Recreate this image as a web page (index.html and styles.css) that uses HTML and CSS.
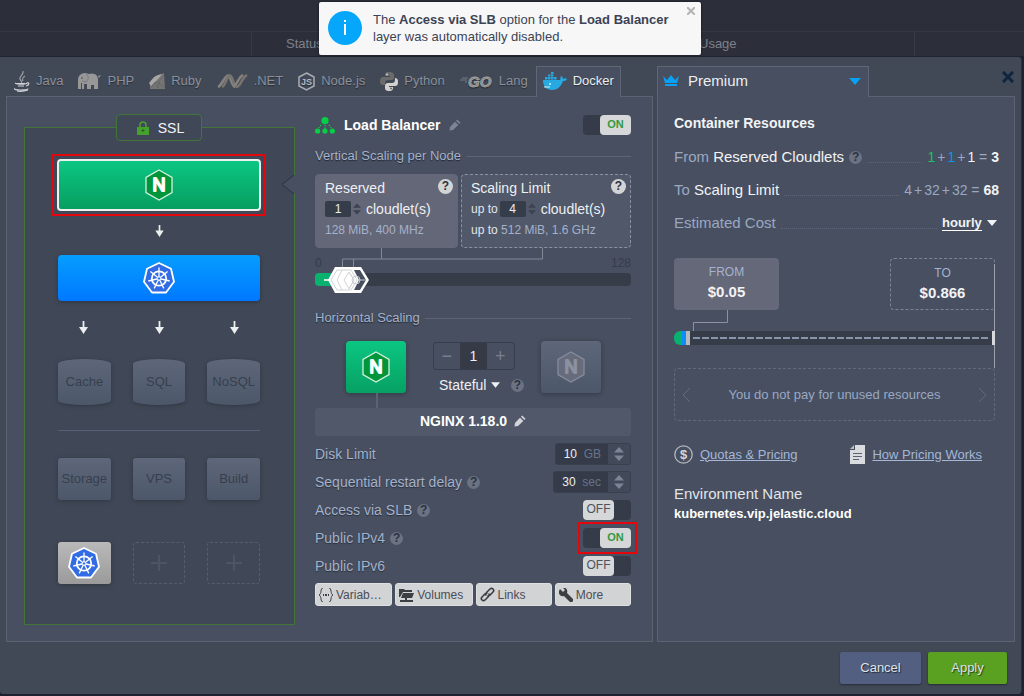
FILE: index.html
```html
<!DOCTYPE html>
<html lang="en">
<head>
<meta charset="utf-8">
<meta name="viewport" content="width=device-width, initial-scale=1">
<title>Environment topology</title>
<link rel="stylesheet" href="styles.css">
</head>
<body>
<svg class="defs" aria-hidden="true">
  <defs>
    <symbol id="nginx" viewBox="0 0 28 32">
      <path d="M14 1 27 8.500V23.500L14 31 1 23.500V8.500z" fill="#019639" stroke="#d5efdf" stroke-width="1.300"/>
      <text x="14" y="22" text-anchor="middle" font-family="Liberation Sans, sans-serif" font-size="18" fill="#fff" stroke="#fff" stroke-width="1.800" stroke-linejoin="round">N</text>
    </symbol>
    <symbol id="nginx-off" viewBox="0 0 28 32">
      <path d="M14 1 27 8.500V23.500L14 31 1 23.500V8.500z" fill="#666c7c" stroke="#868c9b" stroke-width="1.300"/>
      <text x="14" y="22" text-anchor="middle" font-family="Liberation Sans, sans-serif" font-size="18" fill="#8b91a0" stroke="#8b91a0" stroke-width="1.800" stroke-linejoin="round">N</text>
    </symbol>
    <symbol id="k8s" viewBox="0 0 34 34">
      <path d="M17 2 29 7.800 32 20.800 24 31.500H10L2 20.800 5 7.800z" fill="#326ce5" stroke="#fff" stroke-width="1.800" stroke-linejoin="round"/>
      <g stroke="#fff" fill="none">
        <circle cx="17" cy="17.500" r="7.200" stroke-width="1.800"/>
        <path stroke-width="1.300" d="M17 6.500V17.500M25.600 10.600 17 17.500M27.700 20 17 17.500M21.800 27.400 17 17.500M12.200 27.400 17 17.500M6.300 20 17 17.500M8.400 10.600 17 17.500"/>
        <circle cx="17" cy="17.500" r="1.700" fill="#326ce5" stroke-width="1"/>
      </g>
    </symbol>
    <symbol id="arrow" viewBox="0 0 9 13">
      <path d="M3.600 0h1.800v6H9L4.500 13 0 6h3.600z" fill="#eceef0"/>
    </symbol>
    <symbol id="pencil" viewBox="0 0 12 12">
      <path d="M8.200 .500 11.500 3.800 10.300 5 7 1.700zM6 2.700 9.300 6 4 11 .500 11.500 1 8z" fill="currentColor"/>
    </symbol>
    <symbol id="updown" viewBox="0 0 10 14">
      <path d="M5 0 10 5.500H0zM5 14 0 8.500H10z" fill="currentColor"/>
    </symbol>
    <symbol id="caret" viewBox="0 0 10 6"><path d="M0 0h10L5 6z" fill="currentColor"/></symbol>
  </defs>
</svg>

<div class="backdrop" aria-hidden="true">
  <div class="backdrop-bar"></div>
  <div class="backdrop-head"><span></span><span>Status</span><span>Usage</span><span></span></div>
</div>

<aside class="toast" role="status">
  <svg class="toast-icon" width="34" height="34" viewBox="0 0 34 34"><circle cx="17" cy="17" r="17" fill="#06a7fb"/><rect x="16" y="13" width="2" height="11" fill="#fff"/><rect x="16" y="9" width="2" height="2" fill="#fff"/></svg>
  <p>The <b>Access via SLB</b> option for the <b>Load Balancer</b> layer was automatically disabled.</p>
  <button class="toast-close" aria-label="Dismiss"><svg width="8" height="8" viewBox="0 0 8 8"><path d="M0 0 8 8M8 0 0 8" stroke="#b4b4b4" stroke-width="2"/></svg></button>
</aside>

<main class="dialog">
  <div class="columns">
    <section class="column">
      <nav class="tabs">
        <button class="tab"><svg width="17" height="21" viewBox="0 0 17 21" fill="none" stroke="#9da1a8" stroke-width="1.200"><path d="M10 0C11 4 6 5 7 8s3 2 1 5M12 5C9 7 9 8 10 10"/><path stroke="#d0d2d6" d="M4 12.500h8M5 15h6M3 12c-3 1 10 2 11 0 2-1 3 2-1 3M2 17.500c-3 2 13 2 13 0M4 20c4 1 8 0 11-1"/></svg>Java</button>
        <button class="tab"><svg width="23" height="17" viewBox="0 0 23 17" fill="#979798"><path d="M0 16V7C0 3 3 0 7 0c2 0 3 1 4 1C17-1 21 3 20 9v7h-4v-4h-3v4H9v-5H6v5H4v-6H3v6zM20 3l3-1-2 3z"/><path d="M8 1c3 2 3 5 0 8L4 8" fill="none" stroke="#6b7078" stroke-width=".8"/><circle cx="4" cy="5" r=".8" fill="#444"/></svg>PHP</button>
        <button class="tab"><svg width="16" height="16" viewBox="0 0 16 16"><path d="M1 11 7 3 15 0 16 16H1z" fill="#767573"/><path d="M0 10 5 4 9 2 13 1 10 5 7 8 2 13z" fill="#a9a7a4"/><path d="M2 15 6 9 9 15 11 7 15 3M7 8 15 14" stroke="#60646a" fill="none" stroke-width=".8"/></svg>Ruby</button>
        <button class="tab"><svg width="31" height="14" viewBox="0 0 31 14" fill="none" stroke-width="2.600"><path stroke="#85817d" d="M1 13C5 11 7 3 11 1.500c3 0 3 10.500 7 11.500"/><path stroke="#77736f" d="M5 13C9 11 9 3 13 1.500c3 0 3 10.500 7 11.500 4-1 5-10 10-12"/><path stroke="#85817d" d="M17 12C21 10 21 3 26 1"/></svg>.NET</button>
        <button class="tab"><svg width="17" height="19" viewBox="0 0 17 19"><path d="M8.500 1 16 5v9l-7.500 4L1 14V5z" fill="none" stroke="#a9adb4" stroke-width="1.500"/><text x="8.500" y="13" text-anchor="middle" font-family="Liberation Sans, sans-serif" font-size="9" font-weight="700" fill="#b8bbc1">JS</text></svg>Node.js</button>
        <button class="tab"><svg width="18" height="19" viewBox="0 0 18 19"><path d="M9 0C5 0 5 2 5 4h5v1H3C1 5 0 7 0 9.500S1 13 3 13h2v-2c0-2 1-3 3-3h4c1 0 2-1 2-2V3c0-2-2-3-5-3z" fill="#6b6b6b"/><path d="M9 19c4 0 4-2 4-4H9v-1h6c2 0 3-1 3-4s-1-4-3-4v2c0 2-1 3-3 3H8c-2 0-3 1-3 3v2c0 2 1 3 4 3z" fill="#d3d2cf"/><circle cx="7" cy="2.500" r="1" fill="#ccc"/><circle cx="11" cy="16.500" r="1" fill="#666"/></svg>Python</button>
        <button class="tab"><svg class="golang" width="33" height="14" viewBox="0 0 33 14"><path d="M2 4h6M0 6h7M5 8h2" stroke="#77797e" stroke-width="1.200"/><text x="8" y="13" font-family="Liberation Sans, sans-serif" font-size="15" font-weight="700" font-style="italic" fill="#a4a4a4" stroke="#a4a4a4" stroke-width=".8">GO</text></svg>Lang</button>
        <button class="tab tab-active"><svg width="24" height="18" viewBox="0 0 24 18" fill="#27aae1"><path d="M0 8h17c1-2 0-3 1-4 2 1 2 2 2 3 1-1 3-1 4 0-1 2-3 2-4 2-2 6-6 9-11 9C3 18 0 14 0 8z"/><path d="M2 5h2.500v2.500H2zM5 5h2.500v2.500H5zM8 5h2.500v2.500H8zM11 5h2.500v2.500H11zM5 2.500h2.500v2H5zM8 2.500h2.500v2H8zM8 0h2.500v2H8z"/><circle cx="7" cy="12" r="1" fill="#d7eefa"/><path d="M1 15h6" stroke="#d7eefa"/></svg>Docker</button>
      </nav>

      <div class="panel topology-panel">
        <div class="topology">
          <button class="ssl"><svg width="12" height="14" viewBox="0 0 12 14"><path d="M3 6V4a3 3 0 0 1 6 0v2" fill="none" stroke="#4e9f38" stroke-width="1.500"/><path d="M0 6h12v8H0z" fill="#45a02c"/><path d="M6 8v3M4.500 9.500h3" stroke="#2d5b2c"/></svg>SSL</button>
          <svg class="notch" width="14" height="20" viewBox="0 0 14 20"><path d="M14 0 1 9.500 14 19z" fill="#474f60"/><path d="M13 0 1 9.500 13 19" fill="none" stroke="#2b3240"/></svg>
          <div class="highlight"><button class="layer layer-nginx" aria-label="NGINX load balancer"><svg width="28" height="32"><use href="#nginx"/></svg></button></div>
          <div class="arrows arrows-one"><svg width="9" height="12"><use href="#arrow"/></svg></div>
          <button class="layer layer-k8s" aria-label="Kubernetes"><svg width="34" height="34"><use href="#k8s"/></svg></button>
          <div class="arrows arrows-three"><svg width="9" height="13"><use href="#arrow"/></svg><svg width="9" height="13"><use href="#arrow"/></svg><svg width="9" height="13"><use href="#arrow"/></svg></div>
          <div class="nodes"><button class="node node-db">Cache</button><button class="node node-db">SQL</button><button class="node node-db">NoSQL</button></div>
          <hr class="divider">
          <div class="nodes"><button class="node">Storage</button><button class="node">VPS</button><button class="node">Build</button></div>
          <div class="nodes nodes-extra">
            <button class="node node-k8s" aria-label="Kubernetes"><svg width="34" height="34"><use href="#k8s"/></svg></button>
            <button class="node node-add" aria-label="Add layer"><svg width="16" height="16" viewBox="0 0 16 16"><path d="M8 0v16M0 8h16" stroke="#4b5566" stroke-width="2"/></svg></button>
            <button class="node node-add" aria-label="Add layer"><svg width="16" height="16" viewBox="0 0 16 16"><path d="M8 0v16M0 8h16" stroke="#4b5566" stroke-width="2"/></svg></button>
          </div>
        </div>

        <div class="settings">
          <header class="layer-title">
            <svg width="20" height="17" viewBox="0 0 20 17" fill="#07cf45"><circle cx="10" cy="3.700" r="3.600"/><circle cx="2.600" cy="14" r="2.600"/><circle cx="10" cy="14" r="2.600"/><circle cx="17.400" cy="14" r="2.600"/><path d="M10 8v4M6 8 3 12M14 8l3 4" stroke="#07cf45" stroke-width="1.300" stroke-dasharray="1.300 1.300"/></svg>
            <h1>Load Balancer</h1>
            <button class="icon-button dim" aria-label="Rename"><svg width="12" height="12"><use href="#pencil"/></svg></button>
            <label class="toggle"><input type="checkbox" role="switch" checked aria-label="Load Balancer"><span class="knob"></span></label>
          </header>

          <h2 class="section">Vertical Scaling per Node</h2>
          <div class="cards">
            <div class="card card-reserved">
              <div class="card-head"><span>Reserved</span><button class="help help-light" aria-label="Help">?</button></div>
              <label class="card-value"><input type="text" value="1"><svg width="8" height="12"><use href="#updown"/></svg><span>cloudlet(s)</span></label>
              <p>128 MiB, 400 MHz</p>
            </div>
            <div class="card card-limit">
              <div class="card-head"><span>Scaling Limit</span><button class="help help-light" aria-label="Help">?</button></div>
              <label class="card-value"><em>up to</em><input type="text" value="4"><svg width="8" height="12"><use href="#updown"/></svg><span>cloudlet(s)</span></label>
              <p><em>up to</em> 512 MiB, 1.6 GHz</p>
            </div>
          </div>
          <div class="slider">
            <div class="slider-scale"><span>0</span><span>128</span></div>
            <input class="slider-track" type="range" min="0" max="128" value="4" aria-label="Cloudlets">
            <svg class="slider-overlay" width="240" height="48" viewBox="0 0 240 48">
              <path d="M66.500 0v11M27.500 20V11H227.500V0M38.500 11v9" fill="none" stroke="#838995" />
              <path d="M9 32h6" stroke="#d5eadf" stroke-width="2"/>
              <path d="M13 32 20 19H46L54 32 46 45H20z" fill="#fff"/>
              <path d="M39 22h6l6 10-6 10h-6l5-10z" fill="#474f60"/>
              <path d="M22 22 16 32l6 10h14l6-10-6-10zM27 22l-5 10 5 10M29 32l5-8 5 8-5 9zM34 24l5 8-5 9" fill="none" stroke="#d3d4d8"/>
              <circle cx="41" cy="32" r="4" fill="none" stroke="#c9cbd1"/>
              <path d="M44 32h7" stroke="#c9cbd1"/>
            </svg>
          </div>

          <h2 class="section section-horizontal">Horizontal Scaling</h2>
          <div class="scaling">
            <button class="tile tile-on" aria-label="NGINX node"><svg width="28" height="32"><use href="#nginx"/></svg></button>
            <div class="scaling-controls">
              <div class="counter"><button aria-label="Fewer">−</button><input type="text" value="1" aria-label="Nodes"><button aria-label="More">+</button></div>
              <div class="mode"><select aria-label="Scaling mode"><option>Stateful</option></select><svg width="9" height="6"><use href="#caret"/></svg><button class="help" aria-label="Help">?</button></div>
            </div>
            <button class="tile" aria-label="Add node"><svg width="28" height="32"><use href="#nginx-off"/></svg></button>
          </div>
          <button class="version">NGINX 1.18.0 <svg width="12" height="12"><use href="#pencil"/></svg></button>

          <div class="form">
            <div class="row"><label for="disk">Disk Limit</label>
              <div class="field"><input id="disk" type="text" value="10"><span class="unit">GB</span><button aria-label="Step"><svg width="10" height="14"><use href="#updown"/></svg></button></div></div>
            <div class="row"><label for="delay">Sequential restart delay</label><button class="help" aria-label="Help">?</button>
              <div class="field"><input id="delay" type="text" value="30"><span class="unit">sec</span><button aria-label="Step"><svg width="10" height="14"><use href="#updown"/></svg></button></div></div>
            <div class="row"><label for="slb">Access via SLB</label><button class="help" aria-label="Help">?</button>
              <div class="toggle"><input id="slb" type="checkbox" role="switch"><span class="knob"></span></div></div>
            <div class="row"><label for="ipv4">Public IPv4</label><button class="help" aria-label="Help">?</button>
              <div class="toggle toggle-marked"><input id="ipv4" type="checkbox" role="switch" checked><span class="knob"></span></div></div>
            <div class="row"><label for="ipv6">Public IPv6</label>
              <div class="toggle"><input id="ipv6" type="checkbox" role="switch"><span class="knob"></span></div></div>
          </div>

          <div class="tools">
            <button><svg width="14" height="14" viewBox="0 0 14 14" fill="none" stroke="#3c3e42"><path d="M4 0C1 0 3 6 0 7c3 1 1 7 4 7M10 0c3 0 1 6 4 7-3 1-1 7-4 7"/><path d="M4 7h1M6 7h2M9 7h1" stroke-width="2"/></svg>Variab…</button>
            <button><svg width="15" height="14" viewBox="0 0 15 14" fill="#3c3e42"><path d="M0 9V1h5l1 1h7v2H4L1 9zM4 5h11l-2 5H2zM6 10h2v2h6v2H1v-2h5z"/></svg>Volumes</button>
            <button><svg width="15" height="15" viewBox="0 0 15 15" fill="none" stroke="#3c3e42" stroke-width="1.600" stroke-linecap="round"><path d="M6 8C5 7 6 6 7 5l3-3c2-2 5 1 3 3l-3 3-2 1M9 7c1 1 0 2-1 3l-3 3c-2 2-5-1-3-3l3-3 2-1"/></svg>Links</button>
            <button><svg width="14" height="14" viewBox="0 0 14 14" fill="#3c3e42"><path d="M1 1 4 4 6 2 4 0c3-1 5 2 4 5l6 6c1 2-1 4-3 3L5 8C2 9-1 6 0 3z"/></svg>More</button>
          </div>
        </div>
      </div>
    </section>

    <section class="column">
      <div class="tabs">
        <label class="plan">
          <svg width="16" height="12" viewBox="0 0 16 12" fill="#09a1f5"><path d="M0 1 4 5 8 0l4 5 4-4-2 7H2zM2 9h12v2H2z"/></svg>
          <select aria-label="Plan"><option>Premium</option></select>
          <svg class="plan-caret" width="12" height="7"><use href="#caret"/></svg>
        </label>
        <button class="close" aria-label="Close"><svg width="12" height="12" viewBox="0 0 12 12"><path d="M1 1 11 11M11 1 1 11" stroke="#10243d" stroke-width="3"/></svg></button>
      </div>
      <div class="panel pricing">
        <h2 class="pricing-title">Container Resources</h2>
        <div class="line"><span><i>From</i> Reserved Cloudlets</span><button class="help" aria-label="Help">?</button><span class="dots"></span><span class="sum"><span class="green">1</span><i>+</i><span class="blue">1</span><i>+</i><span class="white">1</span> = <b>3</b></span></div>
        <div class="line"><span><i>To</i> Scaling Limit</span><span class="dots"></span><span class="sum">4<i>+</i>32<i>+</i>32 = <b>68</b></span></div>
        <div class="line"><label for="period"><i>Estimated Cost</i></label><span class="dots"></span><select id="period" class="period"><option>hourly</option></select><svg width="10" height="6"><use href="#caret"/></svg></div>

        <div class="costs">
          <div class="cost cost-from"><span>FROM</span><b>$0.05</b></div>
          <div class="cost cost-to"><span>TO</span><b>$0.866</b></div>
          <svg class="from-link" width="60" height="35" viewBox="0 0 60 35"><path d="M53.500 0v12.500H19.500V35" fill="none" stroke="#8d929d"/></svg>
          <div class="to-link"></div>
        </div>
        <div class="meter"><span class="meter-green"></span><span class="meter-blue"></span><span class="meter-grey"></span><span class="meter-rest"></span><span class="meter-end"></span></div>
        <div class="note">
          <button aria-label="Previous"><svg width="8" height="14" viewBox="0 0 8 14"><path d="M8 0 1 7l7 7" fill="none" stroke="#616b7b"/></svg></button>
          <p>You do not pay for unused resources</p>
          <button aria-label="Next"><svg width="8" height="14" viewBox="0 0 8 14"><path d="M0 0 7 7l-7 7" fill="none" stroke="#616b7b"/></svg></button>
        </div>
        <div class="links">
          <a href="#quotas"><svg width="19" height="19" viewBox="0 0 19 19"><circle cx="9.500" cy="9.500" r="8.700" fill="none" stroke="#b4b8bf" stroke-width="1.300"/><text x="9.500" y="14" text-anchor="middle" font-family="Liberation Sans, sans-serif" font-size="13" font-weight="700" fill="#d4d6da">$</text></svg><span>Quotas &amp; Pricing</span></a>
          <a href="#pricing"><svg width="15" height="19" viewBox="0 0 15 19"><path d="M5 0h10v19H0V5h5z" fill="#dadbde"/><path d="M0 4 4 0v4z" fill="#b9bcc2"/><path d="M3 8.500h9M3 11.500h9M3 14.500h6" stroke="#5b6271"/></svg><span>How Pricing Works</span></a>
        </div>
        <dl class="env"><dt>Environment Name</dt><dd>kubernetes.vip.jelastic.cloud</dd></dl>
      </div>
    </section>
  </div>
  <footer class="actions"><button class="cancel">Cancel</button><button class="apply">Apply</button></footer>
</main>
</body>
</html>
```
FILE: styles.css
```css
* { box-sizing: border-box; }

body {
  margin: 0;
  min-height: 100vh;
  background: #1d222e;
  color: #f2f3f5;
  font: 13px/16px "Liberation Sans", Arial, sans-serif;
}

h1, h2, p, dl, dd { margin: 0; font-weight: 400; }
i, em { font-style: normal; }
svg { flex: none; display: block; }
button, input, select { font: inherit; color: inherit; border: 0; padding: 0; margin: 0; background: none; }
select { appearance: none; outline: none; }
button { cursor: pointer; }
.defs { position: absolute; width: 0; height: 0; }

b, h1, .pricing-title, dd, .version { font-weight: 700; }

/* backdrop */
.backdrop { background: #2c2f3a; color: #7e818a; }
.backdrop-bar { height: 32px; border-bottom: 1px solid #343844; }
.backdrop-head { display: grid; grid-template-columns: 252fr 409fr 254fr 109fr; height: 25px; line-height: 24px; border-bottom: 1px solid #20242e; }
.backdrop-head span { padding-left: 34px; }
.backdrop-head span:first-child, .backdrop-head span:nth-child(3) { border-right: 1px solid #363a45; }
.backdrop-head span:nth-child(3) { padding-left: 38px; }

.toast {
  position: absolute;
  z-index: 5;
  top: 2px;
  left: 50%;
  width: 382px;
  margin-left: -193px;
  padding: 9px 24px 10px 9px;
  display: flex;
  gap: 11px;
  background: #f7f7f7;
  color: #3c4354;
  border-radius: 2px;
  box-shadow: 0 0 3px rgba(0, 0, 0, .6);
}
.toast p { line-height: 17px; }
.toast-close { position: absolute; top: 5px; right: 6px; }

/* dialog */
.dialog {
  margin: 0 3px 3px 0;
  background: #414957;
  border-radius: 0 3px 3px 3px;
  box-shadow: 1px 0 0 #2b313d;
}
.columns { display: grid; grid-template-columns: 647fr 358fr; gap: 4px; padding: 9px 6px 0; }
.column { display: flex; flex-direction: column; min-width: 0; }
.tabs { display: flex; gap: 1px; height: 31px; margin-bottom: -1px; }
.tab { display: flex; align-items: center; gap: 6px; padding: 0 6px 2px; color: #8b909b; text-shadow: 0 1px 1px rgba(0, 0, 0, .4); border: 1px solid transparent; border-bottom: 0; white-space: nowrap; }
.tab-active { background: #474f60; border-color: #5f6777; color: #eceef1; z-index: 1; }
.golang { overflow: visible; }
.panel { flex: 1; border: 1px solid #5b6373; background: #474f60; }

/* topology */
.topology-panel { display: grid; grid-template-columns: 271fr 316fr; gap: 20px; padding: 18px 21px 16px 17px; }
.topology { position: relative; margin-top: 12px; padding: 26px 34px 40px 33px; border: 1px solid #417538; background: #404857; }
.ssl { position: absolute; top: -14px; left: 50%; width: 86px; height: 27px; margin-left: -44px; display: flex; align-items: center; justify-content: center; gap: 9px; padding-left: 4px; background: #404857; border: 1px solid #417538; border-radius: 4px; font-size: 14px; }
.notch { position: absolute; top: 47px; right: -1px; }
.highlight { margin: 0 -6px; padding: 3px; border: 2px solid #e3060c; }
.layer { display: flex; align-items: center; justify-content: center; width: 100%; border-radius: 4px; }
.layer-nginx { height: 52px; border: 2px solid #eef1ef; background: linear-gradient(#0cc682, #069e60); }
.layer-k8s { height: 46px; background: linear-gradient(#069dff, #0078ff); box-shadow: 0 1px 4px rgba(0, 0, 0, .3); }
.arrows { display: flex; justify-content: center; }
.arrows-one { padding: 9px 0 18px; }
.arrows-three { justify-content: space-between; padding: 20px 21px 25px; }
.nodes { display: grid; grid-template-columns: repeat(3, 53fr); gap: 22px; }
.nodes-extra { margin-top: 42px; }
.node { display: flex; align-items: center; justify-content: center; min-width: 0; height: 42px; border-radius: 3px; color: #363f4d; background: linear-gradient(#5e677a, #4d576a); box-shadow: 0 1px 5px rgba(0, 0, 0, .25); }
.node-db { height: 46px; border-radius: 26px / 5px; }
.node-k8s { background: linear-gradient(#b9b9b9, #999a99); }
.node-add { background: none; border: 1px dashed #545e6f; box-shadow: none; }
.divider { width: 100%; height: 1px; margin: 25px 0 27px; border: 0; background: #566074; }

/* settings */
.settings { min-width: 0; color: #a4b1cb; }
.layer-title { display: flex; align-items: center; gap: 9px; height: 20px; color: #fff; }
h1 { font-size: 14px; line-height: 20px; }
.icon-button { display: flex; }
.dim { color: #7c8496; }

.toggle { position: relative; display: flex; margin-left: auto; width: 48px; height: 20px; border-radius: 4px; background: #353b48; }
.toggle input { position: absolute; inset: 0; width: 100%; height: 100%; opacity: 0; z-index: 1; }
.knob { width: 31px; border-radius: 4px; background: #d6d7d9; color: #4d535f; font-size: 12px; line-height: 19px; text-align: center; }
.knob::after { content: "OFF"; }
.toggle input:checked + .knob { margin-left: auto; color: #329a43; font-weight: 700; font-size: 11px; }
.toggle input:checked + .knob::after { content: "ON"; }
.toggle-marked::before { content: ""; position: absolute; inset: -6px -6px -6px -5px; border: 2px solid #e3060c; }

.section { display: flex; align-items: center; gap: 5px; margin-top: 13px; font-size: 13px; line-height: 16px; text-shadow: 0 1px 1px rgba(0, 0, 0, .5); }
.section::after { content: ""; flex: 1; height: 1px; background: #5b6374; }
.section-horizontal { margin-top: 24px; }

.cards { display: grid; grid-template-columns: 143fr 170fr; gap: 3px; margin-top: 10px; }
.card { height: 74px; min-width: 0; padding: 4px; padding-left: 9px; border: 1px solid #646778; border-radius: 4px; font-size: 12px; }
.card-reserved { background: #646778; }
.card-limit { background: #505869; border: 1px dashed #8a91a0; }
.card-head { display: flex; justify-content: space-between; font-size: 14px; line-height: 18px; color: #eef0f3; }
.card-value { display: flex; align-items: center; gap: 2px; height: 16px; margin: 4px 0 5px; color: #eef0f3; }
.card-value span { font-size: 14px; margin-left: 3px; }
.card-value svg { color: #3b4250; }
.card-value input { width: 26px; height: 16px; border-radius: 2px; background: #363d4a; text-align: center; }
.card em { color: #e3e6eb; }
.card p { white-space: nowrap; }

.help { display: grid; place-items: center; width: 13px; height: 13px; border-radius: 50%; background: #6b7283; color: #2c323e; font-size: 12px; line-height: 13px; font-weight: 700; }
.help-light { width: 15px; height: 15px; background: #d3d4d6; }

.slider { position: relative; padding-top: 7px; }
.slider-scale { display: flex; justify-content: space-between; height: 18px; font-size: 12px; color: #353c49; }
.slider-track { display: block; width: 100%; height: 13px; appearance: none; border-radius: 4px; background: linear-gradient(90deg, #0ab26f 20px, #363d49 20px); }
.slider-track::-webkit-slider-thumb { appearance: none; width: 52px; height: 26px; opacity: 0; }
.slider-overlay { position: absolute; top: 0; left: 0; pointer-events: none; }

.scaling { display: flex; justify-content: space-between; margin-top: 15px; padding: 0 30px 0 31px; }
.tile { position: relative; display: grid; place-items: center; width: 60px; height: 52px; border-radius: 4px; background: linear-gradient(#5e677a, #4d576a); box-shadow: 0 1px 5px rgba(0, 0, 0, .3); }
.tile-on { background: linear-gradient(#0cc682, #06a163); }
.tile-on::after { content: ""; position: absolute; top: 100%; left: 50%; width: 2px; height: 15px; background: #5a6273; }
.scaling-controls { display: flex; flex-direction: column; align-items: center; padding-top: 1px; gap: 7px; }
.counter { display: flex; width: 82px; height: 28px; border: 1px solid #363d4b; border-radius: 3px; color: #767f90; font-size: 18px; }
.counter button { flex: 1; }
.counter input { width: 27px; min-width: 0; background: #353a46; color: #eef0f3; font-size: 14px; text-align: center; }
.mode { display: flex; align-items: center; gap: 4px; height: 16px; color: #eef0f3; padding-left: 16px; font-size: 14px; }
.mode .help { margin-left: 7px; }
.version { display: flex; align-items: center; justify-content: center; gap: 7px; width: 100%; height: 28px; margin-top: 15px; padding-bottom: 3px; border-radius: 3px; background: #515869; color: #fff; font-size: 14px; }
.version svg { color: #d3d5da; }

.form { display: grid; gap: 6px; margin-top: 7px; }
.row { display: flex; align-items: center; gap: 5px; height: 22px; }
.row > label { font-size: 14px; text-shadow: 0 1px 1px rgba(0, 0, 0, .4); }
.field { display: flex; align-items: center; height: 22px; margin-left: auto; border: 1px solid #39404d; border-radius: 3px; background: #353b48; }
.field input { width: 24px; height: 20px; padding-left: 8px; color: #eef0f3; font-size: 12px; }
.field .unit { padding: 0 7px 0 4px; color: #68738a; font-size: 12px; }
.field button { display: grid; place-items: center; width: 22px; height: 20px; background: #424a59; color: #7c8597; }

.tools { display: grid; grid-template-columns: 77fr 77fr 76fr 76fr; gap: 3px; margin-top: 6px; }
.tools button { display: flex; align-items: center; gap: 3px; height: 23px; padding-left: 3px; border-radius: 3px; background: #d2d3d5; color: #4a4d55; font-size: 12px; white-space: nowrap; border: 1px solid #dedfe0; }

/* pricing */
.plan { display: flex; align-items: center; gap: 9px; width: 212px; padding: 0 7px 2px 5px; border: 1px solid #5f6777; border-bottom: 0; background: #474f60; color: #eceef1; font-size: 15px; position: relative; z-index: 1; }
.plan select { flex: 1; min-width: 0; }
.plan svg { color: #09a1f5; }
.close { align-self: flex-start; margin: 5px 1px 0 auto; }
.pricing { padding: 17px 15px 16px 16px; font-size: 14px; }
.pricing-title { font-size: 14px; line-height: 18px; margin-bottom: 15px; }
.pricing i { color: #9aa8c3; }
.line { display: flex; align-items: center; height: 20px; gap: 5px; margin-bottom: 13px; font-size: 15px; white-space: nowrap; }
.dots { flex: 1; height: 12px; border-bottom: 1px dotted #5a6578; }
.sum { font-size: 14px; color: #9aa8c3; }
.sum b, .white { color: #f2f3f5; }
.sum i { padding: 0 2px; }
.green { color: #1dc260; }
.blue { color: #0f93ec; }
.period { width: 40px; height: 16px; font-size: 13px; font-weight: 700; border-bottom: 1px solid #fff; }
.period + svg { margin-right: 2px; }

.costs { position: relative; display: flex; justify-content: space-between; margin: 25px 4px 0 0; }
.cost { display: flex; flex-direction: column; align-items: center; width: 105px; height: 52px; padding: 5px 0; border-radius: 4px; line-height: 19px; font-size: 15px; }
.cost span { font-size: 12px; color: #a4b3d0; }
.cost-from { background: #656878; }
.cost-to { border: 1px dashed #7d8593; }
.from-link { position: absolute; top: 52px; left: 0; }
.to-link { position: absolute; top: 6px; right: 0; width: 1px; height: 104px; background: #9a9fa9; }
.meter { position: relative; display: flex; height: 14px; margin: 21px 4px 23px 0; border-radius: 6px 0 0 6px; overflow: hidden; background: #363d49; }
.meter-green { width: 8px; background: #0ab070; }
.meter-blue { width: 4px; background: #0b8dfb; }
.meter-grey { width: 4px; background: #b9babc; }
.meter-rest { flex: 1; height: 2px; margin: 6px 4px 0 3px; background: repeating-linear-gradient(90deg, #8795ad 0 7px, transparent 7px 9px); }
.meter-end { width: 3px; background: #d8dade; }
.note { display: flex; align-items: center; justify-content: space-between; height: 53px; margin-right: 4px; padding: 0 7px; border: 1px dashed #616a7a; border-radius: 4px; color: #9aa8c3; font-size: 13px; }
.links { display: flex; justify-content: space-between; margin: 24px 17px 0 0; font-size: 13px; }
.links a { display: flex; align-items: center; gap: 7px; color: #a4b7d9; text-decoration: none; }
.links span { text-decoration: underline; }
.env { margin-top: 20px; line-height: 20px; font-size: 15px; color: #e3e5e9; }
.env dd { font-size: 13px; color: #fff; }

/* footer */
.actions { display: flex; justify-content: flex-end; gap: 7px; padding: 10px 14px; }
.actions button { height: 32px; border-radius: 2px; font-size: 13px; color: #dfe2e8; text-shadow: 1px 1px 1px rgba(0, 0, 0, .6); box-shadow: 0 1px 2px rgba(0, 0, 0, .4); }
.cancel { width: 81px; background: #525f80; }
.apply { width: 79px; background: #5aa122; }
```
